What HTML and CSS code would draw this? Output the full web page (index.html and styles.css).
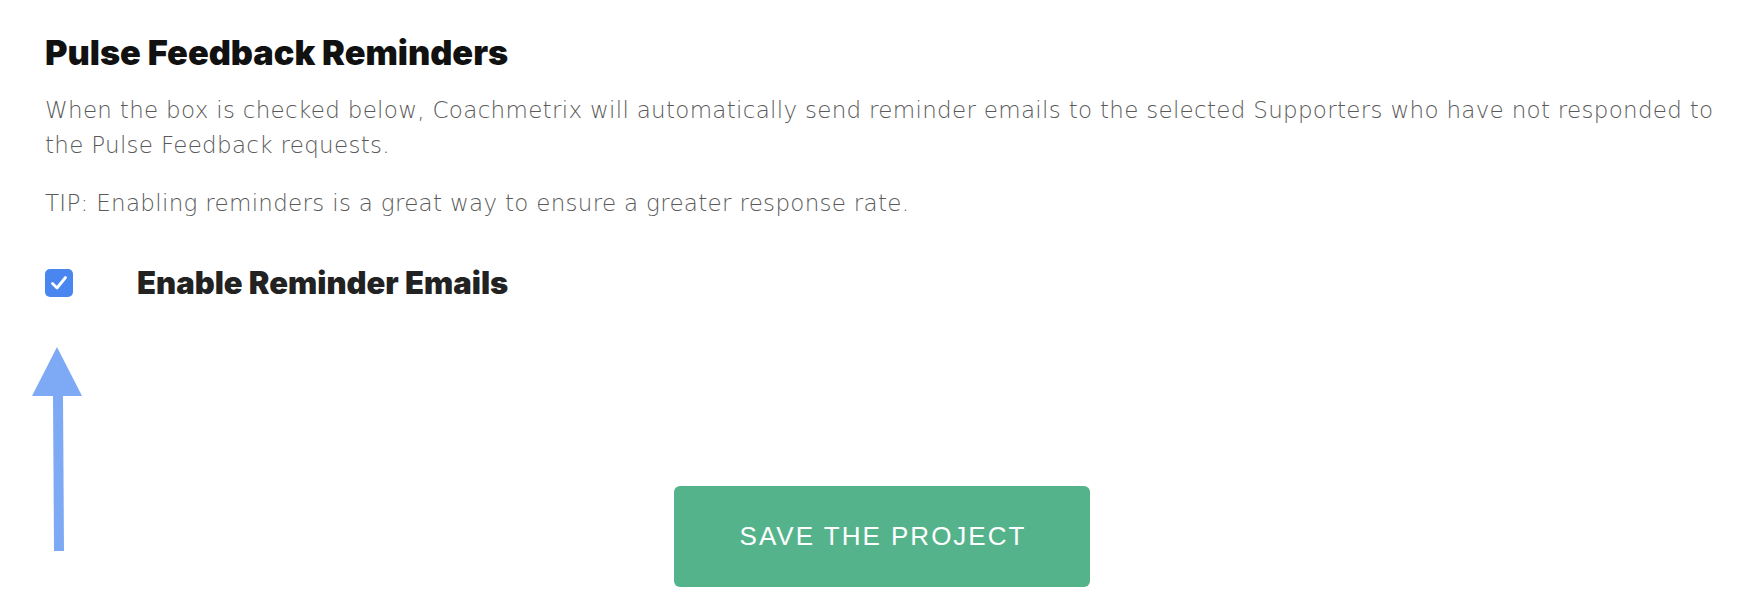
FILE: index.html
```html
<!DOCTYPE html>
<html>
<head>
<meta charset="utf-8">
<link rel="stylesheet" href="styles.css">
</head>
<body>
<div class="page">
  <h2 class="title">Pulse Feedback Reminders</h2>
  <p class="desc">When the box is checked below, Coachmetrix will automatically send reminder emails to the selected Supporters who have not responded to the Pulse Feedback requests.</p>
  <p class="desc">TIP: Enabling reminders is a great way to ensure a greater response rate.</p>
  <label class="check-row">
    <span class="checkbox">
      <svg width="28" height="28" viewBox="0 0 28 28"><path d="M7.5 14.5 L12 19 L20.5 8.5" fill="none" stroke="#fff" stroke-width="2.8" stroke-linecap="round" stroke-linejoin="round"/></svg>
    </span>
    <span class="check-label">Enable Reminder Emails</span>
  </label>
  <div class="actions">
    <button class="save-btn">SAVE THE PROJECT</button>
  </div>
  <svg class="arrow" width="60" height="210" viewBox="0 0 60 210">
    <polygon points="25,0 50,49 0,49" fill="#7eaaf5"/>
    <polygon points="21,48 31,48 32,204 22,204" fill="#7eaaf5"/>
  </svg>
</div>
</body>
</html>
```
FILE: styles.css
```css
html, body {
  margin: 0;
  padding: 0;
  background: #fff;
}
.page {
  position: relative;
  padding: 31px 20px 0 45px;
  height: 612px;
  box-sizing: border-box;
}
.title {
  margin: 0;
  font-family: "Inter", sans-serif;
  font-weight: 900;
  font-size: 34.3px;
  line-height: 43px;
  color: #111;
}
.desc {
  margin: 19px 0 0;
  font-family: "DejaVu Sans", sans-serif;
  font-weight: 200;
  font-size: 23px;
  letter-spacing: 0.3px;
  line-height: 35px;
  color: #5a5a5a;
}
.desc + .desc {
  margin-top: 23px;
}
.check-row {
  display: flex;
  align-items: center;
  gap: 64px;
  margin-top: 43px;
}
.checkbox {
  width: 28px;
  height: 28px;
  border-radius: 5px;
  background: #4a86ef;
  display: block;
}
.checkbox svg { display: block; }
.check-label {
  font-family: "Inter", sans-serif;
  font-weight: 900;
  font-size: 31px;
  color: #222;
}
.actions {
  display: flex;
  justify-content: center;
  margin-top: 185px;
  padding-right: 9px;
}
.save-btn {
  width: 416px;
  height: 101px;
  border: 0;
  border-radius: 6px;
  background: #55b38c;
  color: #fff;
  font-family: "Liberation Sans", Arial, sans-serif;
  font-size: 26px;
  letter-spacing: 2px;
  text-indent: 2px;
}
.arrow {
  position: absolute;
  left: 32px;
  top: 347px;
}
```
